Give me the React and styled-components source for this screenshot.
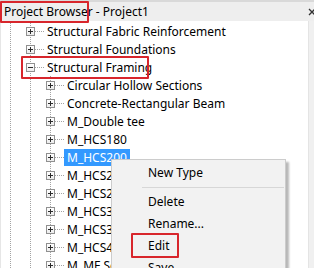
import React from 'react'
import styled, { createGlobalStyle } from 'styled-components'

const GlobalStyle = createGlobalStyle`
  body {
    margin: 0;
    font-family: "Noto Sans", "Open Sans", sans-serif;
    font-size: 12px;
    color: #000;
    background: #fff;
  }
`

const RED = '#d8262c'
const DOT = '#a3a3a3'

const Window = styled.div`
  position: relative;
  width: 314px;
  height: 268px;
  overflow: hidden;
  display: flex;
  flex-direction: column;
  background: #eeeeee;
`

const TitleBar = styled.div`
  height: 19px;
  border-top: 2px solid #d9d9d9;
  display: flex;
  align-items: center;
  padding-left: 4px;
  position: relative;
  white-space: nowrap;
`

const Callout = styled.span`
  position: absolute;
  left: ${p => p.$left}px;
  top: ${p => p.$top}px;
  width: ${p => p.$width}px;
  height: ${p => p.$height}px;
  border: 2px solid ${RED};
  border-radius: 1px;
  box-sizing: border-box;
  pointer-events: none;
`

const Close = styled.svg`
  position: absolute;
  right: -2px;
  top: 6px;
`

const Body = styled.div`
  flex: 1;
  display: flex;
  min-height: 0;
`

const Panel = styled.div`
  flex: 1;
  background: #fff;
  border-left: 1px solid #e6e6e6;
  overflow: hidden;
`

const Strip = styled.div`
  width: 5px;
  background: #f0f0f0;
  border-left: 1px solid #e4e4e4;
`

const rail = x => `linear-gradient(to bottom, ${DOT} 50%, transparent 50%) ${x}px 0 / 1px 2px repeat-y`

const Tree = styled.div`
  padding-top: 1px;
  background: ${rail(9)}, ${rail(29)};
`

const Children = styled.div`
  background: ${rail(49)};
`

const Row = styled.div`
  position: relative;
  height: 18px;
  display: flex;
  align-items: center;
  padding-left: ${p => 25 + (p.$level - 1) * 20}px;
  white-space: nowrap;
`

const Expander = styled.span`
  width: 9px;
  height: 9px;
  box-sizing: border-box;
  border: 1px solid #909090;
  background: linear-gradient(#fff, #ececec);
  display: flex;
  align-items: center;
  justify-content: center;
  flex-shrink: 0;
`

const Connector = styled.span`
  width: 9px;
  height: 1px;
  background: linear-gradient(to right, ${DOT} 50%, transparent 50%) 0 0 / 2px 1px repeat-x;
  flex-shrink: 0;
`

const Label = styled.span`
  height: 17px;
  line-height: 17px;
  padding: 0 3px;
  background: ${p => (p.$selected ? '#3399ff' : 'transparent')};
  color: ${p => (p.$selected ? '#fff' : '#000')};
`

const Menu = styled.div`
  position: absolute;
  left: 111px;
  top: 159px;
  width: 173px;
  height: 130px;
  padding-top: 2px;
  background: #f2f2f2;
  border: 1px solid #cccccc;
  box-shadow: 3px 3px 2px rgba(0, 0, 0, 0.28);
`

const Item = styled.div`
  position: relative;
  height: 22px;
  line-height: 22px;
  padding-left: 36px;
`

const Separator = styled.div`
  height: 1px;
  margin: 3px 1px 3px 30px;
  background: #d7d7d7;
`

const Sign = ({ open }) => (
  <svg width="7" height="7" viewBox="0 0 7 7">
    <path d="M1 3.5h5" stroke="#2b2b2b" strokeWidth="1" />
    {!open && <path d="M3.5 1v5" stroke="#2b2b2b" strokeWidth="1" />}
  </svg>
)

const Node = ({ level, label, open, selected, children }) => (
  <Row $level={level}>
    <Expander><Sign open={open} /></Expander>
    <Connector />
    <Label $selected={selected}>{label}</Label>
    {children}
  </Row>
)

const types = [
  'Circular Hollow Sections',
  'Concrete-Rectangular Beam',
  'M_Double tee',
  'M_HCS180',
  'M_HCS200',
  'M_HCS250',
  'M_HCS265',
  'M_HCS300',
  'M_HCS320',
  'M_HCS400',
  'M_MF Sections',
]

export default function App() {
  return (
    <>
      <GlobalStyle />
      <Window>
        <TitleBar>
          Project Browser - Project1
          <Callout $left={0} $top={-1} $width={89} $height={22} />
          <Close width="8" height="8" viewBox="0 0 8 8">
            <path d="M1 1l6 6M7 1L1 7" stroke="#333" strokeWidth="1.3" />
          </Close>
        </TitleBar>
        <Body>
          <Panel>
            <Tree>
              <Node level={1} label="Structural Fabric Reinforcement" />
              <Node level={1} label="Structural Foundations" />
              <Node level={1} label="Structural Framing" open>
                <Callout $left={20} $top={-2} $width={128} $height={23} />
              </Node>
              <Children>
                {types.map(t => (
                  <Node key={t} level={2} label={t} selected={t === 'M_HCS200'} />
                ))}
              </Children>
            </Tree>
          </Panel>
          <Strip />
        </Body>
        <Menu>
          <Item>New Type</Item>
          <Separator />
          <Item>Delete</Item>
          <Item>Rename...</Item>
          <Item>
            Edit
            <Callout $left={19} $top={-2} $width={48} $height={25} />
          </Item>
          <Item>Save</Item>
        </Menu>
      </Window>
    </>
  )
}
